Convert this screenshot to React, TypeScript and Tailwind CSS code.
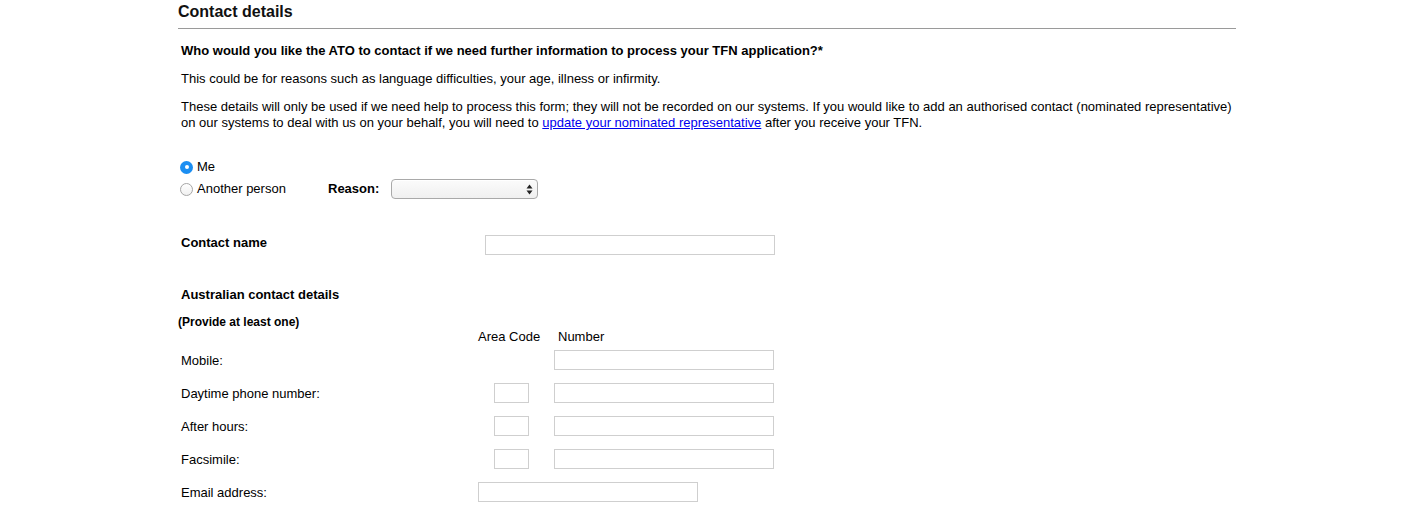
import React from 'react'

const font = { fontFamily: '"Liberation Sans", Arial, sans-serif' }

function Radio({ checked, label }: { checked?: boolean; label: string }) {
  return (
    <span className="flex items-center gap-[4px]">
      {checked ? (
        <span className="flex h-[13px] w-[13px] items-center justify-center rounded-full bg-[#1b8ef2]">
          <span className="h-[4px] w-[4px] rounded-full bg-white" />
        </span>
      ) : (
        <span className="h-[13px] w-[13px] rounded-full border border-[#a6a6a6] bg-gradient-to-b from-white to-[#f0f0f0]" />
      )}
      <span>{label}</span>
    </span>
  )
}

function Field({ className }: { className: string }) {
  return <div className={`h-[20px] border border-[#cfcfcf] bg-white ${className}`} />
}

function PhoneRow({ label, area = true, email = false }: { label: string; area?: boolean; email?: boolean }) {
  return (
    <div className="flex h-[20px] items-center">
      <div className="mt-[2px] w-[300px] pl-[3px]">{label}</div>
      {email ? (
        <Field className="w-[220px]" />
      ) : (
        <>
          <div className="w-[76px] pl-[16px]">{area ? <Field className="w-[35px]" /> : null}</div>
          <Field className="w-[220px]" />
        </>
      )}
    </div>
  )
}

export default function App() {
  return (
    <div className="min-h-[529px] bg-white text-[13px] leading-[16px] text-black" style={font}>
      <div className="ml-[178px] w-[1058px]">
        <h2 className="pt-[2px] h-[22px] text-[16px] font-bold leading-[20px] text-[#111]">Contact details</h2>
        <div className="mt-[6px] h-[1px] bg-[#9a9a9a]" />

        <div className="pl-[3px]">
          <p className="mt-[14px] font-bold">
            Who would you like the ATO to contact if we need further information to process your TFN application?*
          </p>
          <p className="mt-[12px]">This could be for reasons such as language difficulties, your age, illness or infirmity.</p>
          <p className="mt-[12px] w-[1056px]">
            These details will only be used if we need help to process this form; they will not be recorded on our systems. If you
            would like to add an authorised contact (nominated representative) on our systems to deal with us on your behalf, you
            will need to{' '}
            <a href="#" className="text-[#0000ee] underline">
              update your nominated representative
            </a>{' '}
            after you receive your TFN.
          </p>

          <div className="mt-[25px] -ml-px">
            <div className="flex h-[22px] items-center">
              <Radio checked label="Me" />
            </div>
            <div className="flex h-[22px] items-center">
              <div className="w-[148px]">
                <Radio label="Another person" />
              </div>
              <span className="mr-[12px] font-bold">Reason:</span>
              <div className="flex h-[20px] w-[147px] items-center justify-end rounded-[4px] border border-[#a9a9a9] bg-gradient-to-b from-[#fbfbfb] to-[#f0f0f0] pr-[4px] shadow-[inset_0_1px_0_#fff]">
                <svg width="7" height="11" viewBox="0 0 7 11">
                  <path d="M3.5 0.5 L6.5 4.5 L0.5 4.5 Z" fill="#222" />
                  <path d="M3.5 10.5 L6.5 6.5 L0.5 6.5 Z" fill="#222" />
                </svg>
              </div>
            </div>
          </div>

          <div className="mt-[35px] flex items-start">
            <div className="w-[304px] font-bold">Contact name</div>
            <Field className="w-[290px]" />
          </div>

          <p className="mt-[32px] font-bold">Australian contact details</p>
        </div>

        <p className="mt-[12px] text-[12px] font-bold leading-[14px]">(Provide at least one)</p>

        <div className="flex">
          <div className="w-[300px]" />
          <div className="w-[80px]">Area Code</div>
          <div>Number</div>
        </div>

        <div className="mt-[5px] flex flex-col gap-[13px]">
          <PhoneRow label="Mobile:" area={false} />
          <PhoneRow label="Daytime phone number:" />
          <PhoneRow label="After hours:" />
          <PhoneRow label="Facsimile:" />
          <PhoneRow label="Email address:" email />
        </div>
      </div>
    </div>
  )
}
